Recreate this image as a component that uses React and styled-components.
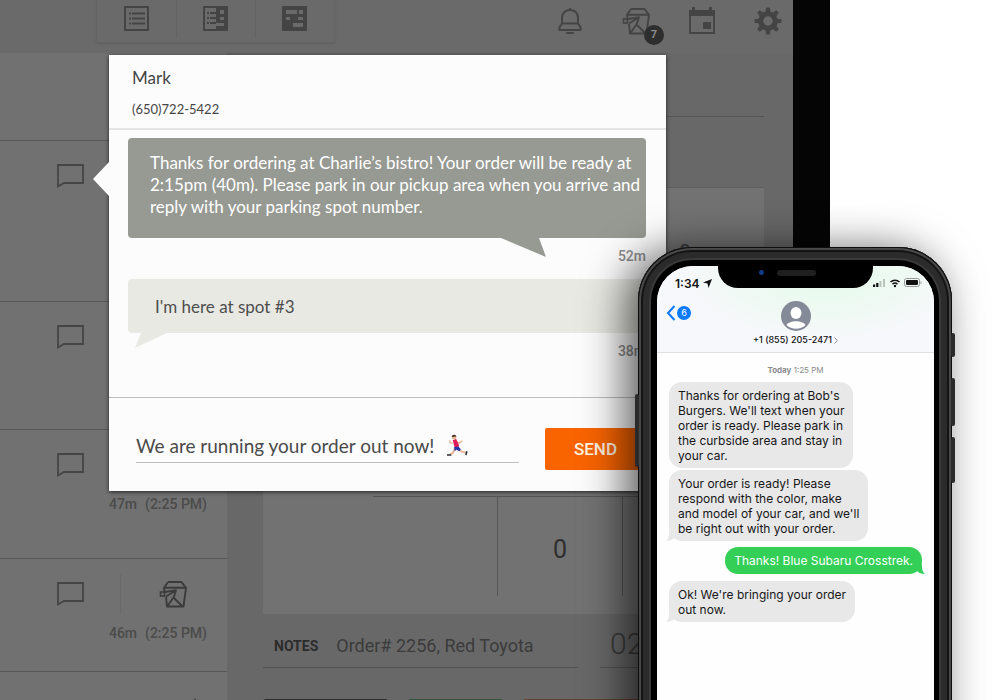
import React, { useState } from 'react';
import styled, { createGlobalStyle } from 'styled-components';

const GlobalStyle = createGlobalStyle`
  * {
    box-sizing: border-box;
  }

  body {
    margin: 0;
    background: #ffffff;
  }

  button,
  input {
    font-family: inherit;
    margin: 0;
  }
`;

const Stage = styled.main`
  position: relative;
  height: 100vh;
  overflow: hidden;
  background: #ffffff;
  font-family: Roboto, 'Noto Sans', sans-serif;
`;

/* Tablet */

const Tablet = styled.div`
  width: 83%;
  height: 100%;
  display: flex;
  flex-direction: column;
  border-right: 37px solid #050505;
  background: #686868;
  color: #3b3b3b;
`;

const TopBar = styled.header`
  flex: none;
  height: 53px;
  display: flex;
  justify-content: space-between;
  align-items: flex-start;
  padding: 0 9px 0 96px;
  background: #6a6a6a;
`;

const ViewSwitch = styled.div`
  display: flex;
  height: 43px;
  border: 1px solid #646464;
  border-top: none;
  box-shadow: 0 1px 2px #606060;
`;

const IconButton = styled.button`
  display: flex;
  align-items: center;
  justify-content: center;
  padding: 0;
  border: none;
  background: none;
  color: #444444;
`;

const ViewButton = styled(IconButton)`
  width: 79px;
  height: 38px;

  & + & {
    border-left: 1px solid #636363;
  }
`;

const Tools = styled.div`
  display: flex;
  gap: 34px;
  padding-top: 5px;
`;

const ToolButton = styled(IconButton)`
  position: relative;
  width: 32px;
  height: 32px;
`;

const Badge = styled.span`
  position: absolute;
  right: -12px;
  bottom: -8px;
  width: 20px;
  height: 20px;
  border-radius: 50%;
  background: #2e2e2e;
  color: #8a8a8a;
  font-size: 11px;
  font-weight: 700;
  line-height: 20px;
  text-align: center;
`;

const Main = styled.div`
  flex: 1;
  min-height: 0;
  display: flex;
`;

const OrderList = styled.ul`
  flex: none;
  width: 227px;
  margin: 0;
  padding: 0;
  list-style: none;
  background: #717171;
`;

const OrderRow = styled.li`
  height: ${(props) => props.$height}px;
  border-bottom: 1px solid #585858;
  padding: 22px 20px 0 56px;
`;

const OrderIcons = styled.div`
  display: flex;
  align-items: center;
  justify-content: ${(props) => (props.$end ? 'flex-end' : 'flex-start')};
  height: 26px;
`;

const OrderDivider = styled.span`
  width: 1px;
  height: 40px;
  margin: 0 38px 0 36px;
  background: #6a6a6a;
`;

const OrderTimes = styled.div`
  display: flex;
  justify-content: flex-end;
  gap: 8px;
  margin-top: 16px;
  font-size: 14px;
  font-weight: 500;
  line-height: 20px;
  color: #4b4b4b;
`;

const Details = styled.section`
  flex: 1;
  min-width: 0;
  padding: 0 29px 0 36px;
`;

const DetailsTitle = styled.div`
  height: 64px;
  border-bottom: 1px solid #555555;
`;

const Panel = styled.div`
  display: flex;
  flex-direction: column;
  justify-content: space-between;
  height: 427px;
  margin-top: 70px;
  padding: 52px 0 18px 110px;
  border-top: 1px solid #5f5f5f;
  background: #727272;
`;

const PanelNumber = styled.span`
  padding-right: 73px;
  font-size: 22px;
  line-height: 26px;
  text-align: right;
`;

const CountGrid = styled.div`
  display: grid;
  grid-template-columns: 124px 125px 1fr;
  height: 100px;
  border-top: 1px solid #565656;
`;

const CountCell = styled.div`
  border-left: ${(props) => (props.$first ? 'none' : '1px solid #565656')};
  padding-top: 38px;
  font-size: 25px;
  line-height: 30px;
  text-align: center;
  color: #2e2e2e;
`;

const NotesRow = styled.div`
  display: flex;
  gap: 22px;
`;

const Notes = styled.div`
  display: flex;
  align-items: center;
  gap: 18px;
  flex: none;
  width: 315px;
  height: 54px;
  padding: 10px 0 0 11px;
  border-bottom: 1px solid #525252;
  font-size: 18px;
`;

const NotesLabel = styled.strong`
  font-size: 14px;
  color: #2c2c2c;
`;

const Total = styled.div`
  flex: 1;
  height: 54px;
  padding: 11px 0 0 10px;
  border-bottom: 1px solid #525252;
  font-size: 30px;
  font-weight: 300;
  line-height: 38px;
`;

const ActionRow = styled.div`
  display: grid;
  grid-template-columns: 125px 95px 1fr;
  gap: 20px;
  margin-top: 31px;
`;

const Action = styled.button`
  height: 44px;
  border: none;
  border-radius: 3px;
  background: ${(props) => props.$color};
`;

/* Message window */

const Dialog = styled.section`
  position: absolute;
  top: 55px;
  left: 109px;
  width: 557px;
  background: #fcfcfc;
  box-shadow: 0 1px 4px rgba(0, 0, 0, 0.7);
  color: #454545;
  font-family: Lato, 'Noto Sans', sans-serif;
`;

const Pointer = styled.svg`
  position: absolute;
  top: 107px;
  left: -16px;
`;

const DialogHeader = styled.header`
  height: 75px;
  padding: 12px 23px 0;
  border-bottom: 2px solid #e4e4e4;
`;

const Customer = styled.h1`
  margin: 0;
  font-size: 17px;
  font-weight: 400;
  line-height: 22px;
`;

const CustomerPhone = styled.p`
  margin: 10px 0 0;
  font-size: 13px;
  line-height: 20px;
`;

const Thread = styled.div`
  height: 268px;
  padding: 8px 20px 0 19px;
  border-bottom: 1px solid #bdbdbd;
`;

const ThreadBubble = styled.div`
  position: relative;
  height: ${(props) => (props.$sent ? 100 : 54)}px;
  padding: ${(props) => (props.$sent ? '14px 0 0 22px' : '17px 0 0 27px')};
  border-radius: 4px;
  background: ${(props) => (props.$sent ? '#979a93' : '#e9e9e4')};
  color: ${(props) => (props.$sent ? '#ffffff' : '#4d4d4d')};
  font-size: 17px;
  line-height: 22px;
  white-space: nowrap;
`;

const Tail = styled.svg`
  position: absolute;
  top: 100%;
  left: ${(props) => props.$left}px;
`;

const Age = styled.div`
  height: 41px;
  padding-top: 8px;
  font-family: Roboto, sans-serif;
  font-size: 14px;
  font-weight: 500;
  line-height: 20px;
  text-align: right;
  color: #8e8e8e;
`;

const Composer = styled.form`
  display: flex;
  justify-content: space-between;
  align-items: flex-start;
  height: 93px;
  padding: 30px 20px 0 27px;
`;

const Field = styled.div`
  display: flex;
  align-items: center;
  width: 383px;
  height: 35px;
  border-bottom: 1px solid #bfbfbf;
`;

const MessageInput = styled.input`
  width: 311px;
  height: 30px;
  padding: 0;
  border: none;
  outline: none;
  background: none;
  color: #4a4a4a;
  font-size: 19px;
`;

const SendButton = styled.button`
  width: 101px;
  height: 42px;
  border: none;
  border-radius: 2px;
  background: #f96400;
  color: #fff3e2;
  font-family: Roboto, sans-serif;
  font-size: 17px;
  font-weight: 500;
`;

/* Phone */

const Phone = styled.section`
  position: absolute;
  top: 247px;
  right: 48px;
  bottom: -90px;
  width: 314px;
  padding: 19px 18px 19px 19px;
  border-radius: 54px;
  background: #000000;
  box-shadow:
    inset 0 0 0 1px #0d0d0d,
    inset 0 0 0 3px #484848,
    inset 0 0 0 5px #141414,
    inset 0 0 0 11px #2b2b2b,
    inset 0 0 0 13px #3a3a3a,
    -12px 4px 44px rgba(0, 0, 0, 0.65);
  font-family: Inter, sans-serif;
`;

const SideKey = styled.span`
  position: absolute;
  top: ${(props) => props.$top}px;
  ${(props) => props.$side}: -3px;
  width: 4px;
  height: ${(props) => props.$height}px;
  border-radius: 2px;
  background: #2a2a2a;
`;

const PhoneScreen = styled.div`
  height: 100%;
  overflow: hidden;
  border-radius: 36px;
  background: #fefefe;
  color: #111111;
`;

const Notch = styled.div`
  position: absolute;
  top: 18px;
  left: 80px;
  width: 155px;
  height: 23px;
  border-radius: 0 0 20px 20px;
  background: #000000;
  display: flex;
  align-items: flex-start;
  gap: 13px;
  padding: 5px 0 0 41px;
`;

const Lens = styled.span`
  width: 5px;
  height: 5px;
  border-radius: 50%;
  background: #123a86;
`;

const Speaker = styled.span`
  width: 39px;
  height: 6px;
  border-radius: 3px;
  background: #1f1f1f;
`;

const PhoneTop = styled.header`
  height: 87px;
  border-bottom: 1px solid #dfe0e2;
  background:
    radial-gradient(ellipse at 60% 10%, #e4fbe9 0%, rgba(228, 251, 233, 0) 60%),
    #f7f8fb;
`;

const StatusBar = styled.div`
  display: flex;
  justify-content: space-between;
  align-items: center;
  height: 34px;
  padding: 0 12px 0 18px;
`;

const Clock = styled.div`
  display: flex;
  align-items: center;
  gap: 3px;
  font-size: 12px;
  font-weight: 600;
`;

const Contact = styled.div`
  display: grid;
  grid-template-columns: 60px 1fr 60px;
  align-items: start;
`;

const Back = styled.button`
  display: flex;
  align-items: center;
  gap: 1px;
  margin-top: 5px;
  padding: 0 0 0 9px;
  border: none;
  background: none;
`;

const Unread = styled.span`
  width: 14px;
  height: 14px;
  border-radius: 50%;
  background: #0a7aff;
  color: #ffffff;
  font-size: 9px;
  line-height: 14px;
  text-align: center;
`;

const Person = styled.div`
  display: flex;
  flex-direction: column;
  align-items: center;
  padding-top: 1px;
  font-size: 9px;
  font-weight: 500;
  line-height: 14px;
  white-space: nowrap;
`;

const PersonNumber = styled.div`
  display: flex;
  align-items: center;
  gap: 2px;
  margin-top: 2px;
`;

const Chat = styled.div`
  display: flex;
  flex-direction: column;
  align-items: flex-start;
  padding: 10px 12px 0;
`;

const Stamp = styled.p`
  align-self: center;
  margin: 0 0 4px;
  color: #8b8b8f;
  font-size: 8px;
  line-height: 15px;
`;

const ChatBubble = styled.p`
  position: relative;
  align-self: ${(props) => (props.$sent ? 'flex-end' : 'flex-start')};
  margin: 0 0 ${(props) => props.$gap}px;
  padding: 6px 9px 5px;
  min-height: 27px;
  border-radius: 13px;
  background: ${(props) => (props.$sent ? '#33cf57' : '#e8e8e9')};
  color: ${(props) => (props.$sent ? '#ffffff' : '#161616')};
  font-size: 12px;
  line-height: 15px;
  white-space: nowrap;
`;

const ChatTail = styled.svg`
  position: absolute;
  bottom: 0;
  ${(props) => props.$side}: -3px;
`;

const ListIcon = () => (
  <svg width='26' height='26' viewBox='0 0 26 26' aria-hidden='true'>
    <rect x='1' y='1' width='23' height='23' fill='none' stroke='currentColor' strokeWidth='2' />
    <path
      d='M5 7.500h2M8 7.500h13M5 12.500h2M8 12.500h13M5 17.500h2M8 17.500h13'
      stroke='currentColor'
      strokeWidth='1.800'
    />
  </svg>
);

const SplitIcon = () => (
  <svg width='26' height='26' viewBox='0 0 26 26' aria-hidden='true'>
    <rect x='1' y='1' width='23' height='23' fill='none' stroke='currentColor' strokeWidth='2' />
    <path d='M13 0h12v25H13z' fill='currentColor' />
    <path d='M4 7h2M7 7h6M4 12h2M7 12h6M4 17h2M7 17h6' stroke='currentColor' strokeWidth='2' />
    <path d='M17 4h4v4h-4zM17 11h4v3h-4zM13 17h8v3h-8z' fill='#6a6a6a' />
  </svg>
);

const BoardIcon = () => (
  <svg width='26' height='26' viewBox='0 0 26 26' aria-hidden='true'>
    <rect width='25' height='25' rx='1' fill='currentColor' />
    <path d='M4 4h11v4H4zM17 4h4v4h-4zM4 11h4v3H4zM16 11h5v3h-5zM11 17h10v4H11z' fill='#6a6a6a' />
  </svg>
);

const BellIcon = () => (
  <svg width='26' height='28' viewBox='0 0 26 28' fill='none' aria-hidden='true'>
    <path
      d='M13 3C7.500 3 5 6.800 5 11.500v5L2.500 20v3h21v-3L21 16.500v-5C21 6.800 18.500 3 13 3zM5 16.500h16M13 3V1'
      stroke='currentColor'
      strokeWidth='2'
      strokeLinejoin='round'
    />
    <path d='M10 26h6' stroke='currentColor' strokeWidth='2' strokeLinecap='round' />
  </svg>
);

const TakeoutIcon = () => (
  <svg width='28' height='28' viewBox='0 0 28 28' fill='none' aria-hidden='true'>
    <path
      d='M9 2h13.500L27 7.800 24.500 26.500H8L7 17M5.500 11.500 5 7.800 9 2M5 7.800h22M4.500 12.300 17 10.300 7 16.500M17 10.300 14.800 17 8.500 26M14 17l9 9'
      stroke='currentColor'
      strokeWidth='1.900'
      strokeLinejoin='round'
    />
    <rect x='1.500' y='12' width='4' height='4' stroke='currentColor' strokeWidth='1.600' />
  </svg>
);

const CalendarIcon = () => (
  <svg width='26' height='28' viewBox='0 0 26 28' aria-hidden='true'>
    <path d='M0 3h3V0h3v3h14V0h3v3h3v6H0z' fill='currentColor' />
    <path d='M1 8v18h24V8' fill='none' stroke='currentColor' strokeWidth='1.800' />
    <rect x='14' y='15' width='8' height='7' fill='currentColor' />
  </svg>
);

const GearIcon = () => (
  <svg width='28' height='28' viewBox='-14 -14 28 28' aria-hidden='true'>
    <circle r='7.200' fill='none' stroke='currentColor' strokeWidth='5' />
    {[0, 45, 90, 135, 180, 225, 270, 315].map((angle) => (
      <path
        key={angle}
        d='M-2.600-8-1.800-13.500H1.800L2.600-8z'
        fill='currentColor'
        transform={`rotate(${angle})`}
      />
    ))}
  </svg>
);

const ChatIcon = () => (
  <svg width='28' height='26' viewBox='0 0 28 26' fill='none' aria-hidden='true'>
    <path d='M2 2h25v18H8L2 23.500z' stroke='#454545' strokeWidth='1.800' />
  </svg>
);

const RunnerIcon = () => (
  <svg width='21' height='23' viewBox='0 0 22 24' fill='none' role='img' aria-label='runner'>
    <path d='M8 15 6.500 19.500 3 21.500M12 16l3.500 2.500 4 1' stroke='#e8b494' strokeWidth='2' />
    <path d='M6 9.500 3 9V6.500M10 8l3 1.500L16 7' stroke='#e8b494' strokeWidth='1.500' />
    <path d='M6 6.500 9.500 5l3 6.500-.5 3-4-.5z' fill='#dc1c56' />
    <path d='M7.500 13.500l4.500-.5 2.500 3-1.500 2-3-1.500-2 1.500z' fill='#2c35a8' />
    <circle cx='7.500' cy='3.500' r='2.300' fill='#e8b494' />
    <path d='M5 3C5 0 9 0 10 2.500z' fill='#4b2e23' />
    <path d='M0 22h4.500M19.800 22l1-4' stroke='#2d2d3a' strokeWidth='1.700' />
  </svg>
);

const SignalIcons = () => (
  <svg width='50' height='10' viewBox='0 0 50 10' aria-hidden='true'>
    <path d='M1 6.500h2.200V9H1zM4.200 5h2.200v4H4.200z' fill='#111' />
    <path d='M7.500 3h2v6h-2zM11 1h2v8h-2z' fill='#b9c4bd' />
    <path
      d='M18.500 4c2.500-2.400 6.500-2.400 9 0M20.500 6.200c1.500-1.400 3.500-1.400 5 0'
      stroke='#111'
      strokeWidth='1.500'
      fill='none'
    />
    <circle cx='23' cy='8' r='1.200' fill='#111' />
    <rect x='32.500' y='.500' width='15' height='8' rx='2' fill='none' stroke='#999' />
    <rect x='34' y='2' width='12' height='5' rx='1' fill='#111' />
    <path d='M49 3.500v2.500' stroke='#999' />
  </svg>
);

const AvatarIcon = () => (
  <svg width='30' height='30' viewBox='0 0 30 30' aria-hidden='true'>
    <circle cx='15' cy='15' r='15' fill='#858a98' />
    <ellipse cx='15' cy='12' rx='5.500' ry='6' fill='#ffffff' />
    <path d='M5.500 24c3-5 16-5 19 0-5 5-14 5-19 0z' fill='#ffffff' />
  </svg>
);

const orders = [
  { id: 1, height: 161 },
  { id: 2, height: 128 },
  { id: 3, height: 129, wait: '47m', due: '(2:25 PM)' },
  { id: 4, height: 113, wait: '46m', due: '(2:25 PM)', takeout: true },
];

const chat = [
  {
    lines: [
      "Thanks for ordering at Bob's",
      "Burgers. We'll text when your",
      'order is ready. Please park in',
      'the curbside area and stay in',
      'your car.',
    ],
    gap: 2,
  },
  {
    lines: [
      'Your order is ready! Please',
      'respond with the color, make',
      "and model of your car, and we'll",
      'be right out with your order.',
    ],
    gap: 6,
    tail: true,
  },
  { lines: ['Thanks! Blue Subaru Crosstrek.'], gap: 7, sent: true, tail: true },
  { lines: ["Ok! We're bringing your order", 'out now.'], gap: 0, tail: true },
];

const withBreaks = (lines) =>
  lines.map((line, index) => (
    <React.Fragment key={line}>
      {index > 0 && <br />}
      {line}
    </React.Fragment>
  ));

const TabletScreen = () => (
  <Tablet>
    <TopBar>
      <ViewSwitch>
        <ViewButton aria-label='List view'>
          <ListIcon />
        </ViewButton>
        <ViewButton aria-label='Split view'>
          <SplitIcon />
        </ViewButton>
        <ViewButton aria-label='Board view'>
          <BoardIcon />
        </ViewButton>
      </ViewSwitch>
      <Tools>
        <ToolButton aria-label='Notifications'>
          <BellIcon />
        </ToolButton>
        <ToolButton aria-label='Takeout orders'>
          <TakeoutIcon />
          <Badge>7</Badge>
        </ToolButton>
        <ToolButton aria-label='Calendar'>
          <CalendarIcon />
        </ToolButton>
        <ToolButton aria-label='Settings'>
          <GearIcon />
        </ToolButton>
      </Tools>
    </TopBar>
    <Main>
      <OrderList>
        <OrderRow $height={88} />
        {orders.map((order) => (
          <OrderRow key={order.id} $height={order.height}>
            <OrderIcons>
              <ChatIcon />
              {order.takeout && (
                <>
                  <OrderDivider />
                  <TakeoutIcon />
                </>
              )}
            </OrderIcons>
            {order.wait && (
              <OrderTimes>
                <span>{order.wait}</span>
                <span>{order.due}</span>
              </OrderTimes>
            )}
          </OrderRow>
        ))}
        <OrderRow $height={113}>
          <OrderIcons $end>
            <svg width='20' height='22' viewBox='0 0 20 22' aria-hidden='true'>
              <path d='M9 2v18L0 9z' fill='#454545' />
            </svg>
          </OrderIcons>
        </OrderRow>
      </OrderList>
      <Details>
        <DetailsTitle />
        <Panel>
          <PanelNumber>0</PanelNumber>
          <CountGrid>
            <CountCell $first />
            <CountCell>0</CountCell>
            <CountCell />
          </CountGrid>
        </Panel>
        <NotesRow>
          <Notes>
            <NotesLabel>NOTES</NotesLabel>
            <span>Order# 2256, Red Toyota</span>
          </Notes>
          <Total>02</Total>
        </NotesRow>
        <ActionRow>
          <Action $color='#2d2d2d' aria-label='Hold' />
          <Action $color='#2f5a3f' aria-label='Ready' />
          <Action $color='#6b3f2c' aria-label='Cancel' />
        </ActionRow>
      </Details>
    </Main>
  </Tablet>
);

const MessageDialog = () => {
  const [draft, setDraft] = useState('We are running your order out now!');

  return (
    <Dialog>
      <Pointer width='16' height='34' viewBox='0 0 16 34'>
        <path d='M16 0v34L0 17z' fill='#fcfcfc' />
      </Pointer>
      <DialogHeader>
        <Customer>Mark</Customer>
        <CustomerPhone>(650)722-5422</CustomerPhone>
      </DialogHeader>
      <Thread>
        <ThreadBubble $sent>
          {withBreaks([
            'Thanks for ordering at Charlie’s bistro! Your order will be ready at',
            '2:15pm (40m). Please park in our pickup area when you arrive and',
            'reply with your parking spot number.',
          ])}
          <Tail $left={373} width='46' height='19' viewBox='0 0 46 19'>
            <path d='M0 0h38l7 19z' fill='#979a93' />
          </Tail>
        </ThreadBubble>
        <Age>52m</Age>
        <ThreadBubble>
          I&apos;m here at spot #3
          <Tail $left={7} width='32' height='15' viewBox='0 0 32 15'>
            <path d='M6 0h26L0 15z' fill='#e9e9e4' />
          </Tail>
        </ThreadBubble>
        <Age>38m</Age>
      </Thread>
      <Composer onSubmit={(event) => event.preventDefault()}>
        <Field>
          <MessageInput
            aria-label='Message'
            value={draft}
            onChange={(event) => setDraft(event.target.value)}
          />
          <RunnerIcon />
        </Field>
        <SendButton type='submit'>SEND</SendButton>
      </Composer>
    </Dialog>
  );
};

const CustomerMobile = () => (
  <Phone>
    <SideKey $side='left' $top={147} $height={73} />
    <SideKey $side='right' $top={86} $height={24} />
    <SideKey $side='right' $top={131} $height={48} />
    <SideKey $side='right' $top={190} $height={46} />
    <PhoneScreen>
      <PhoneTop>
        <StatusBar>
          <Clock>
            1:34
            <svg width='9' height='9' viewBox='0 0 9 9' aria-hidden='true'>
              <path d='M9 0 5.500 9 4.500 4.500 0 3.500z' fill='#111' />
            </svg>
          </Clock>
          <SignalIcons />
        </StatusBar>
        <Contact>
          <Back aria-label='Back'>
            <svg width='10' height='16' viewBox='0 0 10 16' fill='none'>
              <path d='M8.500 1 2 8l6.500 7' stroke='#0a7aff' strokeWidth='2' />
            </svg>
            <Unread>6</Unread>
          </Back>
          <Person>
            <AvatarIcon />
            <PersonNumber>
              +1 (855) 205-2471
              <svg width='4' height='7' viewBox='0 0 4 7' fill='none'>
                <path d='M.500.500 3.500 3.500.500 6.500' stroke='#888' />
              </svg>
            </PersonNumber>
          </Person>
        </Contact>
      </PhoneTop>
      <Chat>
        <Stamp>
          <b>Today</b> 1:25 PM
        </Stamp>
        {chat.map((message) => (
          <ChatBubble key={message.lines[0]} $sent={message.sent} $gap={message.gap}>
            {withBreaks(message.lines)}
            {message.tail && (
              <ChatTail
                $side={message.sent ? 'right' : 'left'}
                width='14'
                height='10'
                viewBox='0 0 14 10'
              >
                <path
                  d={
                    message.sent
                      ? 'M11 0c0 5 0 7 3 10-4 0-6-1-8-3z'
                      : 'M3 0c0 5 0 7-3 10 4 0 6-1 8-3z'
                  }
                  fill={message.sent ? '#33cf57' : '#e8e8e9'}
                />
              </ChatTail>
            )}
          </ChatBubble>
        ))}
      </Chat>
    </PhoneScreen>
    <Notch>
      <Lens />
      <Speaker />
    </Notch>
  </Phone>
);

const App = () => (
  <>
    <GlobalStyle />
    <Stage>
      <TabletScreen />
      <MessageDialog />
      <CustomerMobile />
    </Stage>
  </>
);

export default App;
